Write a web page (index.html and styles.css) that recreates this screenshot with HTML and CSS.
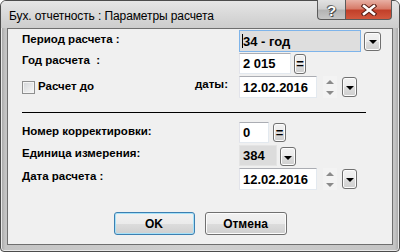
FILE: index.html
```html
<html>
  <head>
    <link rel="stylesheet" href="styles.css">
  </head>
  <body>
    <div class="window">
      <div class="titlebar">
        <span class="title">Бух. отчетность : Параметры расчета</span>
        <div class="caption-buttons">
          <div class="cap-btn help">?</div>
          <div class="cap-btn close">
            <svg width="16" height="12" viewBox="0 0 16 12">
              <path d="M3 2 L13 10 M13 2 L3 10" stroke="#5a1e14" stroke-width="4.6" stroke-linecap="square" />
              <path d="M3 2 L13 10 M13 2 L3 10" stroke="#fff" stroke-width="2.6" stroke-linecap="square" />
            </svg>
          </div>
        </div>
      </div>

      <div class="client">
        <div class="row row1">
          <span class="label">Период расчета :</span>
          <div class="field focused w-period"><span class="caret"></span>34 - год</div>
          <div class="btn drop drop1"><span class="tri"></span></div>
        </div>

        <div class="row row2">
          <span class="label">Год расчета&nbsp; :</span>
          <div class="field w-year">2 015</div>
          <div class="btn eq eq1">=</div>
        </div>

        <div class="row row3">
          <div class="label label-check">
            <span class="checkbox"></span>
            <span>Расчет до</span>
            <span class="dates">даты:</span>
          </div>
          <div class="field w-date">12.02.2016</div>
          <div class="spinner"><span class="up"></span><span class="down"></span></div>
          <div class="btn drop drop-date"><span class="tri"></span></div>
        </div>

        <div class="separator"></div>

        <div class="row row4">
          <span class="label">Номер корректировки:</span>
          <div class="field w-corr">0</div>
          <div class="btn eq eq2">=</div>
        </div>

        <div class="row row5">
          <span class="label">Единица измерения:</span>
          <div class="field disabled w-unit">384</div>
          <div class="btn drop drop2"><span class="tri"></span></div>
        </div>

        <div class="row row6">
          <span class="label">Дата расчета :</span>
          <div class="field w-date">12.02.2016</div>
          <div class="spinner"><span class="up"></span><span class="down"></span></div>
          <div class="btn drop drop-date"><span class="tri"></span></div>
        </div>

        <div class="actions">
          <div class="btn push default">OK</div>
          <div class="btn push">Отмена</div>
        </div>
      </div>
    </div>
  </body>
</html>
```

FILE: styles.css
```css
*,
*::before,
*::after {
  box-sizing: border-box;
}

body {
  margin: 0;
  background-color: #fff;
  font-family: "Liberation Sans", Arial, sans-serif;
  color: #000;
}

.window {
  width: 400px;
  height: 252px;
  border: 1px solid #4c4c4c;
  border-radius: 6px 6px 4px 4px;
  padding: 0 6px 6px 6px;
  display: flex;
  flex-direction: column;
  background: linear-gradient(90deg, #a2a2a2 0, #c4c4c4 4px, #cfcfcf 50%, #c4c4c4 calc(100% - 4px), #a2a2a2 100%);
  box-shadow: inset 0 0 0 1px #e8e8e8;
}

.titlebar {
  height: 27px;
  margin: 0 -6px;
  padding: 0 7px 0 8px;
  display: flex;
  justify-content: space-between;
  align-items: flex-start;
  background: linear-gradient(#e6e6e6, #d6d6d6 60%, #cdcdcd);
  border-radius: 5px 5px 0 0;
}

.title {
  font-size: 12px;
  line-height: 14px;
  padding-top: 8px;
  letter-spacing: -0.1px;
}

.caption-buttons {
  display: flex;
  margin-top: -1px;
}

.cap-btn {
  height: 20px;
  display: flex;
  justify-content: center;
  align-items: center;
  border: 1px solid #5b5b5b;
  border-top: none;
}

.help {
  width: 28px;
  border-right: none;
  border-radius: 0 0 0 4px;
  background: linear-gradient(#e2e2e2, #cfcfcf 45%, #b4b4b4 55%, #c6c6c6);
  color: #fff;
  font-weight: bold;
  font-size: 15px;
  padding-top: 1px;
  text-shadow: 0 0 1px #333, 0 0 1px #333, 1px 1px 0 #555, -1px -1px 0 #777;
}

.close {
  width: 47px;
  border-radius: 0 0 4px 0;
  background: linear-gradient(#e8b0a4, #d77c6a 45%, #c2402a 55%, #d2583e);
}

.client {
  flex: 1;
  border: 1px solid #6f6f6f;
  background-color: #f0f0f0;
  display: flex;
  flex-direction: column;
}

.row {
  display: flex;
  align-items: center;
  margin-left: 14px;
}

.row1 { margin-top: 1px; height: 22px; }
.row2 { margin-top: 1px; height: 21px; }
.row3 { margin-top: 2px; height: 22px; }
.row4 { margin-top: 9px; height: 21px; }
.row5 { margin-top: 2px; height: 21px; }
.row6 { margin-top: 2px; height: 22px; }

.label {
  width: 217px;
  align-self: flex-start;
  font-size: 11.5px;
  font-weight: bold;
  line-height: 13px;
  white-space: nowrap;
}

.row1 .label { padding-top: 3px; }
.row2 .label { padding-top: 1px; }
.row4 .label { padding-top: 3px; }
.row5 .label { padding-top: 2px; }
.row6 .label { padding-top: 2px; }

.label-check {
  display: flex;
  align-items: flex-start;
  padding-top: 4px;
}

.checkbox {
  width: 13px;
  height: 13px;
  margin: 1px 3px 0 0;
  border: 1px solid #8e8f8f;
  background: linear-gradient(135deg, #d4d6d9, #f7f7f7);
  box-shadow: inset 0 0 0 1px #f4f4f4;
}

.dates {
  margin-left: auto;
  margin-right: 11px;
  margin-top: -2px;
}

.field {
  height: 100%;
  display: flex;
  align-items: center;
  padding-left: 3px;
  font-size: 13px;
  font-weight: bold;
  background-color: #fff;
  border: 1px solid #e3e9ef;
  border-top-color: #abadb3;
  border-left-color: #e2e3ea;
}

.focused {
  background-color: #dedede;
  border-color: #7eb4ea;
  padding-left: 2px;
}

.caret {
  width: 1px;
  height: 14px;
  background-color: #000;
}

.disabled {
  background-color: #dcdcdc;
  border-color: #e4e4e4;
}

.w-period { width: 122px; }
.w-year { width: 52px; }
.w-date { width: 78px; }
.w-corr { width: 30px; }
.w-unit { width: 38px; }

.btn {
  border: 1px solid #707070;
  border-radius: 3px;
  background: linear-gradient(#f2f2f2, #ebebeb 50%, #dddddd 50%, #cfcfcf);
  box-shadow: inset 0 0 0 1px #fcfcfc;
  display: flex;
  justify-content: center;
  align-items: center;
}

.drop1 { width: 17px; height: 19px; margin-left: 3px; }
.drop2 { width: 16px; height: 19px; margin-left: 3px; align-self: flex-end; }
.drop-date { width: 15px; height: 20px; margin-left: 5px; }

.tri {
  width: 0;
  height: 0;
  margin-top: 2px;
  border-left: 4px solid transparent;
  border-right: 4px solid transparent;
  border-top: 4px solid #000;
}

.eq {
  font-size: 13px;
  font-weight: bold;
  line-height: 1;
}

.eq1 { width: 12px; height: 20px; margin-left: 3px; }
.eq2 { width: 13px; height: 19px; margin-left: 4px; }

.spinner {
  width: 14px;
  height: 100%;
  margin-left: 6px;
  display: flex;
  flex-direction: column;
  justify-content: space-around;
  align-items: center;
  background-color: #f3f3f3;
}

.up,
.down {
  width: 0;
  height: 0;
  border-left: 4px solid transparent;
  border-right: 4px solid transparent;
}

.up {
  border-bottom: 4px solid #8a8a8a;
}

.down {
  border-top: 4px solid #8a8a8a;
}

.separator {
  height: 1px;
  width: 344px;
  margin: 14px 0 0 14px;
  background-color: #000;
}

.actions {
  display: flex;
  justify-content: center;
  gap: 10px;
  margin-top: 22px;
}

.push {
  width: 81px;
  height: 23px;
  font-size: 12px;
  font-weight: bold;
}

.push + .push {
  width: 82px;
}

.default {
  border-color: #3c7fb1;
  box-shadow: inset 0 0 0 1px #a6e1f8;
}
```
